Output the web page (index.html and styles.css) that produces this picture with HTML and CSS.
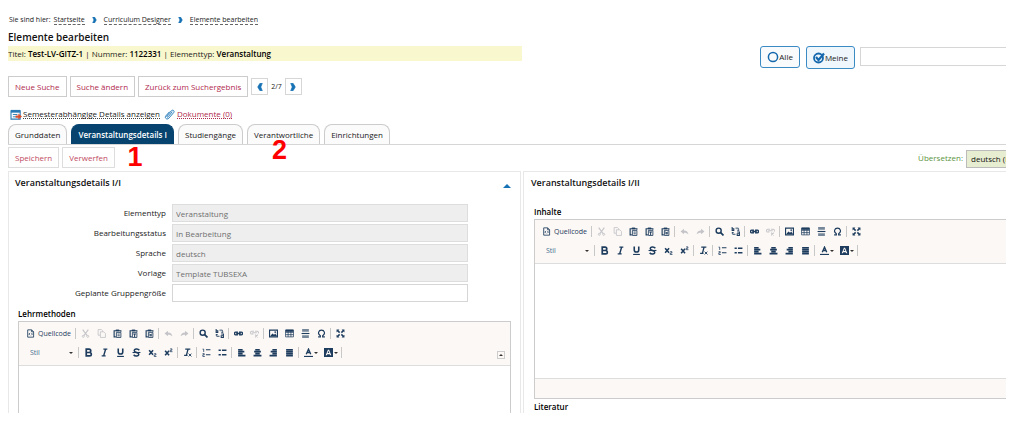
FILE: index.html
```html
<!DOCTYPE html>
<html lang="de">
<head>
<meta charset="utf-8">
<meta name="viewport" content="width=device-width, initial-scale=1">
<title>Elemente bearbeiten</title>
<link rel="stylesheet" href="styles.css">
</head>
<body>
<svg class="sprite" aria-hidden="true">
  <symbol id="source" viewBox="0 0 16 16"><path d="M3 1.500h7l3.500 3.500v9.500H3zM10 1.500V5h3.500" fill="none" stroke="currentColor" stroke-width="1.500"/><path d="M7 7l-2 2 2 2M9.500 7l2 2-2 2" fill="none" stroke="currentColor" stroke-width="1.500"/></symbol>
  <symbol id="cut" viewBox="0 0 16 16"><path d="M3 1l8 11M13 1L5 12" stroke="currentColor" stroke-width="2"/><circle cx="4" cy="13" r="1.800" fill="none" stroke="currentColor" stroke-width="1.500"/><circle cx="12" cy="13" r="1.800" fill="none" stroke="currentColor" stroke-width="1.500"/></symbol>
  <symbol id="copy" viewBox="0 0 16 16"><path d="M10 5V3L8 1H2v10h4M6 5h6l3 3v7H6z" fill="none" stroke="currentColor" stroke-width="1.500"/></symbol>
  <symbol id="paste" viewBox="0 0 16 16"><path d="M5 14H2V3h12v2" fill="none" stroke="currentColor" stroke-width="2"/><path d="M5 1h6v3H5z" fill="currentColor"/><path d="M6 6h8v9H6z" fill="none" stroke="currentColor" stroke-width="1.500"/><path d="M8 9h4M8 12h4" stroke="currentColor" stroke-width="1.500"/></symbol>
  <symbol id="paste-text" viewBox="0 0 16 16"><path d="M5 14H2V3h12v2" fill="none" stroke="currentColor" stroke-width="2"/><path d="M5 1h6v3H5z" fill="currentColor"/><path d="M6 6h8v9H6z" fill="none" stroke="currentColor" stroke-width="1.500"/><path d="M7.500 9h5M10 9v5" stroke="currentColor" stroke-width="1.800"/></symbol>
  <symbol id="paste-word" viewBox="0 0 16 16"><path d="M5 14H2V3h12v2" fill="none" stroke="currentColor" stroke-width="2"/><path d="M5 1h6v3H5z" fill="currentColor"/><path d="M6 6h8v9H6z" fill="none" stroke="currentColor" stroke-width="1.500"/><path d="M8 8l1 5 1-4 1 4 1-5" fill="none" stroke="currentColor" stroke-width="1.200"/></symbol>
  <symbol id="undo" viewBox="0 0 16 16"><path d="M1 8l6-5v3c5 0 7 2 8 7-2-2-4-3-8-3v3z" fill="currentColor"/></symbol>
  <symbol id="redo" viewBox="0 0 16 16"><path d="M15 8L9 3v3c-5 0-7 2-8 7 2-2 4-3 8-3v3z" fill="currentColor"/></symbol>
  <symbol id="find" viewBox="0 0 16 16"><circle cx="6.500" cy="6.500" r="4.500" fill="none" stroke="currentColor" stroke-width="2.500"/><path d="M10 10l5 5" stroke="currentColor" stroke-width="3"/></symbol>
  <symbol id="replace" viewBox="0 0 16 16"><path d="M2 0v6h3V3H2M11 9h4v6h-4v-3h4" fill="none" stroke="currentColor" stroke-width="1.800"/><path d="M8 2h5v4M11 5l2 2 2-2M8 13H3V9M1 11l2-2 2 2" fill="none" stroke="currentColor" stroke-width="1.500"/></symbol>
  <symbol id="link" viewBox="0 0 16 16"><path d="M7 5.500H3a2 2 0 0 0-2 2v1a2 2 0 0 0 2 2h4M9 5.500h4a2 2 0 0 1 2 2v1a2 2 0 0 1-2 2H9M4 8h8" fill="none" stroke="currentColor" stroke-width="2.400"/></symbol>
  <symbol id="unlink" viewBox="0 0 16 16"><path d="M7 4H3a2 2 0 0 0-2 2v1a2 2 0 0 0 2 2h3M9 4h4a2 2 0 0 1 2 2v2M4 6.500h8M9 10l5 5M14 10l-5 5" fill="none" stroke="currentColor" stroke-width="1.800"/></symbol>
  <symbol id="image" viewBox="0 0 16 16"><path d="M1 2h14v12H1z" fill="none" stroke="currentColor" stroke-width="2"/><path d="M2 13l4-5 3 2 2-2 3 4v1z" fill="currentColor"/><circle cx="11" cy="5.500" r="1.500" fill="currentColor"/></symbol>
  <symbol id="table" viewBox="0 0 16 16"><path d="M1 2h14v12H1zM1 6h14M1 10h14M5.500 4v10M10.500 4v10" fill="none" stroke="currentColor" stroke-width="1.300"/><path d="M1 1h14v4H1z" fill="currentColor"/></symbol>
  <symbol id="rule" viewBox="0 0 16 16"><path d="M2 0h12v5H2zM2 11h12v5H2z" fill="currentColor" opacity=".6"/><path d="M1 7h14v2H1z" fill="currentColor"/></symbol>
  <symbol id="omega" viewBox="0 0 16 16"><path d="M2 14h4v-2C0 8 3 2 8 2s8 6 2 10v2h4" fill="none" stroke="currentColor" stroke-width="2"/></symbol>
  <symbol id="maximize" viewBox="0 0 16 16"><path d="M1 1h5L4.500 2.500l3 3-2 2-3-3L1 6zM15 1v5l-1.500-1.500-3 3-2-2 3-3L10 1zM1 15v-5l1.500 1.500 3-3 2 2-3 3L6 15zM15 15h-5l1.500-1.500-3-3 2-2 3 3L15 10z" fill="currentColor"/></symbol>
  <symbol id="bold" viewBox="0 0 16 16"><path d="M4 2h5a3 3 0 0 1 0 6H4zM4 8h6a3 3 0 0 1 0 6H4z" fill="none" stroke="currentColor" stroke-width="3"/></symbol>
  <symbol id="italic" viewBox="0 0 16 16"><path d="M6 2h7M3 14h7M10 2L6.500 14" stroke="currentColor" stroke-width="2.600"/></symbol>
  <symbol id="underline" viewBox="0 0 16 16"><path d="M4 1v6c0 5 8 5 8 0V1" fill="none" stroke="currentColor" stroke-width="2.800"/><path d="M2 15h12" stroke="currentColor" stroke-width="2"/></symbol>
  <symbol id="strike" viewBox="0 0 16 16"><path d="M13 4C11 1 4 1 4 5c0 3 8 3 8 6 0 4-7 4-9 1" fill="none" stroke="currentColor" stroke-width="2.600"/><path d="M1 8h14" stroke="currentColor" stroke-width="2"/></symbol>
  <symbol id="sub" viewBox="0 0 16 16"><path d="M2 4l7 8M9 4l-7 8" stroke="currentColor" stroke-width="2.800"/><path d="M11 10h3v2.500h-3V15h4" fill="none" stroke="currentColor" stroke-width="1.400"/></symbol>
  <symbol id="super" viewBox="0 0 16 16"><path d="M2 5l7 8M9 5l-7 8" stroke="currentColor" stroke-width="2.800"/><path d="M11 1.500h3V4h-3v2.500h4" fill="none" stroke="currentColor" stroke-width="1.400"/></symbol>
  <symbol id="clear" viewBox="0 0 16 16"><path d="M4 2h9M9 2L6 13M2 13h6" fill="none" stroke="currentColor" stroke-width="2.400"/><path d="M10 10l5 5M15 10l-5 5" stroke="currentColor" stroke-width="1.600"/></symbol>
  <symbol id="numbered" viewBox="0 0 16 16"><path d="M7 3h8M7 12h8" stroke="currentColor" stroke-width="2"/><path d="M1 2h2v5M1 10h3v2H1.500v3H5" fill="none" stroke="currentColor" stroke-width="1.400"/></symbol>
  <symbol id="bulleted" viewBox="0 0 16 16"><path d="M7 4h8M7 12h8" stroke="currentColor" stroke-width="2.400"/><path d="M1 2.500h4v3H1zM1 10.500h4v3H1z" fill="currentColor"/></symbol>
  <symbol id="left" viewBox="0 0 16 16"><path d="M2 3h8M2 6.500h11M2 10h8M2 13.500h13" stroke="currentColor" stroke-width="2.800"/></symbol>
  <symbol id="center" viewBox="0 0 16 16"><path d="M4 3h8M2 6.500h12M4 10h8M1 13.500h14" stroke="currentColor" stroke-width="2.800"/></symbol>
  <symbol id="right" viewBox="0 0 16 16"><path d="M6 3h8M3 6.500h11M6 10h8M1 13.500h13" stroke="currentColor" stroke-width="2.800"/></symbol>
  <symbol id="justify" viewBox="0 0 16 16"><path d="M2 3h12M2 6.500h12M2 10h12M2 13.500h12" stroke="currentColor" stroke-width="2.800"/></symbol>
  <symbol id="color" viewBox="0 0 16 16"><path d="M4 11l4-9 4 9M5 8h6" fill="none" stroke="currentColor" stroke-width="2.400"/><path d="M0 15h16" stroke="currentColor" stroke-width="2"/></symbol>
  <symbol id="background" viewBox="0 0 16 16"><path fill-rule="evenodd" d="M0 0h16v16H0zM7 3L3 13h2l1-2h4l1 2h2L9 3zM8 5l1.500 4h-3z" fill="currentColor"/></symbol>
  <symbol id="chevron" viewBox="0 0 8 10"><path d="M1 0h3l3 5-3 5H1l2-5z" fill="currentColor" stroke="currentColor"/></symbol>
</svg>

<template id="toolbar-template">
  <div class="tool-row">
    <button class="source"><svg><use href="#source"/></svg>Quellcode</button><i></i>
    <button class="off" aria-label="Ausschneiden"><svg><use href="#cut"/></svg></button>
    <button class="off" aria-label="Kopieren"><svg><use href="#copy"/></svg></button>
    <button aria-label="Einfügen"><svg><use href="#paste"/></svg></button>
    <button aria-label="Als Text einfügen"><svg><use href="#paste-text"/></svg></button>
    <button aria-label="Aus Word einfügen"><svg><use href="#paste-word"/></svg></button><i></i>
    <button class="off" aria-label="Rückgängig"><svg><use href="#undo"/></svg></button>
    <button class="off" aria-label="Wiederherstellen"><svg><use href="#redo"/></svg></button><i></i>
    <button aria-label="Suchen"><svg><use href="#find"/></svg></button>
    <button aria-label="Ersetzen"><svg><use href="#replace"/></svg></button><i></i>
    <button aria-label="Link"><svg><use href="#link"/></svg></button>
    <button class="off" aria-label="Link entfernen"><svg><use href="#unlink"/></svg></button><i></i>
    <button aria-label="Bild"><svg><use href="#image"/></svg></button>
    <button aria-label="Tabelle"><svg><use href="#table"/></svg></button>
    <button aria-label="Linie"><svg><use href="#rule"/></svg></button>
    <button aria-label="Sonderzeichen"><svg><use href="#omega"/></svg></button><i></i>
    <button aria-label="Maximieren"><svg><use href="#maximize"/></svg></button>
  </div>
  <div class="tool-row">
    <span class="style-box"><select class="style-select" aria-label="Stil"><option>Stil</option></select><b class="caret"></b></span><i></i>
    <button aria-label="Fett"><svg><use href="#bold"/></svg></button>
    <button aria-label="Kursiv"><svg><use href="#italic"/></svg></button>
    <button aria-label="Unterstrichen"><svg><use href="#underline"/></svg></button>
    <button aria-label="Durchgestrichen"><svg><use href="#strike"/></svg></button>
    <button aria-label="Tiefgestellt"><svg><use href="#sub"/></svg></button>
    <button aria-label="Hochgestellt"><svg><use href="#super"/></svg></button><i></i>
    <button aria-label="Formatierung entfernen"><svg><use href="#clear"/></svg></button><i></i>
    <button aria-label="Nummerierte Liste"><svg><use href="#numbered"/></svg></button>
    <button aria-label="Liste"><svg><use href="#bulleted"/></svg></button><i></i>
    <button aria-label="Linksbündig"><svg><use href="#left"/></svg></button>
    <button aria-label="Zentriert"><svg><use href="#center"/></svg></button>
    <button aria-label="Rechtsbündig"><svg><use href="#right"/></svg></button>
    <button aria-label="Blocksatz"><svg><use href="#justify"/></svg></button><i></i>
    <button class="wide" aria-label="Textfarbe"><svg><use href="#color"/></svg><b class="caret"></b></button>
    <button class="wide" aria-label="Hintergrundfarbe"><svg><use href="#background"/></svg><b class="caret"></b></button><i></i>
  </div>
</template>

<div class="page">
  <nav class="crumbs" aria-label="Brotkrumen">
    <span>Sie sind hier:</span>
    <a href="#">Startseite</a><svg><use href="#chevron"/></svg>
    <a href="#">Curriculum Designer</a><svg><use href="#chevron"/></svg>
    <a href="#">Elemente bearbeiten</a>
  </nav>

  <header class="head split">
    <div>
      <h1>Elemente bearbeiten</h1>
      <p class="summary">Titel: <strong>Test-LV-GITZ-1</strong> | Nummer: <strong>1122331</strong> | Elementtyp: <strong>Veranstaltung</strong></p>
    </div>
    <div class="filter">
      <label class="choice"><input type="radio" name="scope"><svg viewBox="0 0 12 12"><circle cx="6" cy="6" r="4.600" fill="none" stroke="currentColor" stroke-width="1.500"/></svg>Alle</label>
      <label class="choice chosen"><input type="radio" name="scope" checked><svg viewBox="0 0 12 12"><circle cx="5.500" cy="6" r="4.500" fill="none" stroke="currentColor" stroke-width="1.800"/><path d="M3 5l2.500 3L11 1.500" fill="none" stroke="currentColor" stroke-width="2.200"/></svg>Meine</label>
      <input class="search" type="text" aria-label="Suche">
    </div>
  </header>

  <div class="actions">
    <button class="btn">Neue Suche</button>
    <button class="btn">Suche ändern</button>
    <button class="btn">Zurück zum Suchergebnis</button>
    <button class="step" aria-label="Vorheriges"><svg class="flip"><use href="#chevron"/></svg></button>
    <span class="count">2/7</span>
    <button class="step" aria-label="Nächstes"><svg><use href="#chevron"/></svg></button>
  </div>

  <div class="links">
    <svg viewBox="0 0 14 12"><path d="M1 2h10v9H1z" fill="#fff" stroke="#2a7ab5" stroke-width="1.200"/><path d="M1 1h10v3H1z" fill="#2a7ab5"/><path d="M3 6h5M3 8.500h4" stroke="#2a7ab5"/><path d="M6 7h3V5l4 3.200L9 11.500v-2H6z" fill="#d9502e"/></svg>
    <a href="#">Semesterabhängige Details anzeigen</a>
    <svg class="clip" viewBox="0 0 12 12"><path d="M9 3L4.500 8.500c-.8 1-2-.1-1.200-1L8 2c1.700-1.800 4 .2 2.500 2L5.300 10C3.300 12.200.2 9.800 2 7.500L6 3" fill="none" stroke="#1672b5" stroke-width="1"/></svg>
    <a class="docs" href="#">Dokumente (0)</a>
  </div>

  <nav class="tabs" aria-label="Bereiche">
    <button class="tab">Grunddaten</button>
    <button class="tab current">Veranstaltungsdetails I<span class="mark">1</span></button>
    <button class="tab">Studiengänge</button>
    <button class="tab">Verantwortliche<span class="mark second-mark">2</span></button>
    <button class="tab">Einrichtungen</button>
  </nav>

  <div class="save-row">
    <button class="btn">Speichern</button>
    <button class="btn">Verwerfen</button>
    <label class="translate" for="lang">Übersetzen:</label>
    <div class="lang-box"><select id="lang"><option>deutsch (Deutsch)</option></select></div>
  </div>

  <main class="split panels">
    <section class="panel">
      <div class="panel-head"><h2>Veranstaltungsdetails I/I</h2><button class="fold" aria-label="Einklappen"></button></div>
      <div class="fields">
        <label for="f1">Elementtyp</label><input id="f1" value="Veranstaltung" disabled>
        <label for="f2">Bearbeitungsstatus</label><input id="f2" value="In Bearbeitung" disabled>
        <label for="f3">Sprache</label><input id="f3" value="deutsch" disabled>
        <label for="f4">Vorlage</label><input id="f4" value="Template TUBSEXA" disabled>
        <label for="f5">Geplante Gruppengröße</label><input id="f5">
      </div>
      <label class="area-label" for="methods">Lehrmethoden</label>
      <div class="editor"><div class="toolbar"><button class="collapse" aria-label="Werkzeugleiste einklappen"><b class="caret up"></b></button></div><textarea id="methods"></textarea></div>
    </section>
    <section class="panel second">
      <div class="panel-head"><h2>Veranstaltungsdetails I/II</h2></div>
      <label class="area-label" for="content">Inhalte</label>
      <div class="editor open"><div class="toolbar"></div><textarea id="content"></textarea><div class="status"></div></div>
      <label class="area-label" for="literature">Literatur</label>
      <div class="editor open"><textarea id="literature"></textarea></div>
    </section>
  </main>
</div>
<script src="toolbar.js"></script>
</body>
</html>
```
FILE: styles.css
```css
* { box-sizing: border-box; }
body { margin: 0; background: #fff; color: #222; font: 8px/12px "Open Sans", sans-serif; }
button, input, select, textarea { font: inherit; color: inherit; margin: 0; padding: 0; border: 0; background: none; border-radius: 0; }
h1, h2, p { margin: 0; }
svg { display: block; flex: none; }
.sprite { position: absolute; width: 0; height: 0; }
.page { height: calc(100vh - 11px); margin: 0 9px 0 8px; padding-top: 14px; overflow: hidden; display: flex; flex-direction: column; }
.page > * { flex: none; }
.split { display: grid; grid-template-columns: 514fr 484fr; }

.crumbs { display: flex; align-items: center; gap: 7px; font-size: 7px; padding-left: 1px; height: 12px; }
.crumbs span { margin-right: -4px; }
.crumbs a { color: #222; text-decoration: none; border-bottom: 1px dashed #666; line-height: 8px; }
.crumbs svg { width: 5px; height: 6px; color: #1672b5; }

.head { padding-top: 4px; }
h1 { font-size: 10px; line-height: 15px; font-weight: 600; color: #111; }
.summary { background: #f9f7cd; line-height: 15px; margin-top: 1px; white-space: nowrap; }
.summary strong { font-weight: 600; color: #000; }
.filter { display: flex; justify-content: flex-end; align-items: flex-start; padding-top: 16px; }
.choice { display: flex; align-items: center; height: 22px; padding: 0 6px; border: 1px solid #3a8ac4; border-radius: 3px; background: #f8fafc; margin-right: 6px; }
.choice input { position: absolute; opacity: 0; }
.choice svg { width: 12px; height: 12px; color: #1668ad; }
.chosen { height: 23px; background: #eff7fd; margin-right: 5px; font-weight: 500; }
.search { width: 146px; height: 19px; margin-top: 1px; border: 1px solid #d6d6d6; border-right: 0; }

.actions { display: flex; align-items: center; gap: 3px; margin-top: 7px; }
.btn { height: 21px; padding: 0 6px; border: 1px solid #ccc; color: #b02a4c; white-space: nowrap; }
.step { width: 17px; height: 17px; border: 1px solid #d6d6d6; display: grid; place-items: center; }
.step svg { width: 6px; height: 8px; color: #1672b5; }
.flip { transform: scaleX(-1); }
.count { font-size: 7px; }

.links { display: flex; align-items: center; height: 14px; margin-top: 10px; padding-left: 2px; }
.links svg { width: 13px; height: 11px; }
.links .clip { width: 11px; margin: 0 2px 0 4px; }
.links a { line-height: 9px; color: #222; text-decoration: none; border-bottom: 1px dotted #444; }
.links .docs { color: #b02a4c; border-color: #b02a4c; }

.tabs { display: flex; gap: 4px; margin-top: 3px; border-bottom: 1px solid #d6d6d6; }
.tab { position: relative; height: 20px; padding: 0 6px; border: 1px solid #ccc; border-bottom: 0; border-radius: 8px 8px 0 0; background: #fbfbfc; white-space: nowrap; }
.current { background: #06446f; border-color: #06446f; color: #fff; font-weight: 600; }
.mark { position: absolute; z-index: 1; left: 55px; top: 22px; color: #f00; font: bold 27px/20px "Liberation Sans", sans-serif; }
.second-mark { left: 24px; top: 15px; }

.save-row { display: flex; align-items: center; gap: 3px; padding: 2px 0 3px; }
.save-row .btn { border-color: #ddd; color: #c14a62; }
.translate { margin-left: auto; color: #5a9440; }
.lang-box { width: 40px; height: 18px; overflow: hidden; margin-top: 3px; }
.lang-box select { appearance: none; width: 100px; height: 18px; padding-left: 4px; background: #e6edd0; border: 1px solid #bbb; color: #111; }

.panels { flex: 1; min-height: 0; overflow: hidden; }
.panel { border: 1px solid #e8e8e8; border-bottom: 0; padding: 0 9px; margin-right: 1px; height: 260px; }
.second { margin: 0 0 0 1px; border-right: 0; padding-right: 0; padding-left: 10px; }
.panel-head { display: flex; justify-content: space-between; align-items: center; height: 21px; margin-left: -3px; }
h2 { font-size: 9px; line-height: 14px; font-weight: 600; color: #111; }
.fold { border: 4px solid transparent; border-top: 0; border-bottom-color: #1672b5; margin-top: 6px; }
.fields { display: grid; grid-template-columns: 148px minmax(0, 296px); column-gap: 6px; row-gap: 2px; margin-top: 11px; align-items: center; }
.fields label { text-align: right; }
.fields input { height: 18px; border: 1px solid #d6d6d6; padding: 0 3px; }
.fields input:disabled { background: #eee; color: #6e6e6e; border-color: #ddd; }
.area-label { display: block; color: #000; font-weight: 600; margin-top: 6px; height: 12px; }
.second .area-label { margin-top: 2px; }
.second .panel-head + .area-label { margin-top: 13px; }
.editor { border: 1px solid #ccc; margin-top: 1px; color: #1d3c5e; }
.open { border-right: 0; }
.toolbar { position: relative; height: 44px; padding: 2px 7px; background: #fcf8f5; border-bottom: 1px solid #ddd; }
.tool-row { display: flex; align-items: center; height: 19px; }
.tool-row button { width: 16px; height: 16px; display: grid; place-items: center; flex: none; }
.tool-row svg { width: 9px; height: 9px; }
.tool-row .off { color: #c4c4c8; }
.tool-row i { width: 1px; height: 11px; background: #c8c8c8; margin: 0 1px; }
.tool-row .source { width: 48px; display: flex; align-items: center; gap: 3px; font-size: 7px; }
.style-box { display: flex; align-items: center; width: 51px; padding: 0 4px; }
.style-select { appearance: none; flex: 1; font-size: 7px; height: 14px; color: #477191; }
.caret { border: 2px solid transparent; border-top-color: #333; border-bottom: 0; }
.up { border: 2px solid transparent; border-bottom-color: #333; border-top: 0; }
.tool-row .wide { width: 20px; display: flex; align-items: center; gap: 1px; padding-left: 4px; }
.collapse { position: absolute; right: 5px; bottom: 6px; width: 8px; height: 8px; border: 1px solid #ccc; display: grid; place-items: center; }
.editor textarea { display: block; width: 100%; height: 114px; resize: none; outline: 0; }
.status { height: 20px; background: #fcf8f5; border-top: 1px solid #ddd; }
```
FILE: toolbar.js
```js
const template = document.getElementById("toolbar-template");
document.querySelectorAll(".toolbar").forEach((bar) => {
  bar.prepend(template.content.cloneNode(true));
});
```
